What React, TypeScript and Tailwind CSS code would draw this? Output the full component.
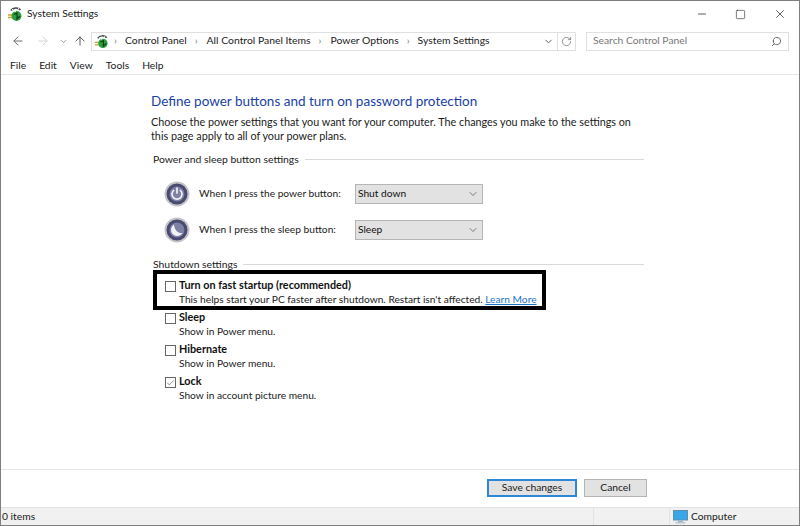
import React from 'react';
import { ArrowLeft, ArrowRight, ArrowUp, ChevronDown, RotateCw, Search, Minus, Square, X, Check } from 'lucide-react';

const AppIcon = ({ size = 16 }: { size?: number }) => (
  <svg width={size} height={size} viewBox="0 0 16 16" className="shrink-0">
    <path d="M1 9h4M1 11.5h4" stroke="#c9a227" strokeWidth="1.4" />
    <circle cx="9.5" cy="10" r="5" fill="#2e9e3f" />
    <path d="M7 8.5 10 7v6l3-3" fill="none" stroke="#0c3d16" strokeWidth="1.2" />
    <path d="M4 4.5C6 1.5 11 1 13.5 4" fill="none" stroke="#3c4a44" strokeWidth="1.6" />
    <path d="M5 3l3 3 4-4" fill="none" stroke="#dfe5e0" strokeWidth="1" />
  </svg>
);

const PowerIcon = ({ sleep }: { sleep?: boolean }) => (
  <svg width="26" height="26" viewBox="0 0 26 26" className="shrink-0">
    <circle cx="13" cy="13" r="12.5" fill="#c4c4c8" />
    <circle cx="13" cy="13" r="10.5" fill="#4a4a70" />
    <circle cx="13" cy="13" r="7.5" fill="#7e80a4" />
    {sleep ? (
      <path d="M10 7.500a6.200 6.200 0 1 0 8.500 8.500C14 16.500 10.500 13 10 7.500z" fill="#f2f2f6" />
    ) : (
      <g fill="none" stroke="#f2f2f6" strokeWidth="1.7" strokeLinecap="round">
        <path d="M9.600 9.500a5 5 0 1 0 6.800 0" />
        <path d="M13 7v5" />
      </g>
    )}
  </svg>
);

const SectionHeading = ({ title }: { title: string }) => (
  <div className="flex items-center gap-[6px] text-[10.4px] leading-[16px] text-[#1a1a1a]">
    <span>{title}</span>
    <div className="h-px flex-1 bg-[#d9d9d9]" />
  </div>
);

const PowerRow = ({ label, value, sleep }: { label: string; value: string; sleep?: boolean }) => (
  <div className="flex h-[26px] items-center">
    <PowerIcon sleep={sleep} />
    <span className="w-[165px] whitespace-nowrap pl-[9px] text-[10.2px] text-[#1a1a1a]">{label}</span>
    <div className="flex h-[20px] w-[128px] items-center justify-between border border-[#b5b5b5] bg-[#e2e2e2] pl-[2px] pr-[3px] text-[10.2px] text-[#111]">
      {value}
      <ChevronDown size={12} strokeWidth={1.5} className="text-[#555]" />
    </div>
  </div>
);

const ShutdownOption = ({ title, desc, checked, children }: { title: string; desc?: string; checked?: boolean; children?: React.ReactNode }) => (
  <div className="flex h-[32px] items-start">
    <div className="mt-[3px] flex h-[11px] w-[11px] shrink-0 items-center justify-center border border-[#666] bg-white">
      {checked && <Check size={10} strokeWidth={1.5} className="text-[#333]" />}
    </div>
    <div className="-mt-[1px] pl-[3px] leading-[15px]">
      <div className="text-[10.8px] font-bold text-[#111]">{title}</div>
      <div className="whitespace-nowrap text-[10.2px] text-[#222]">{desc}{children}</div>
    </div>
  </div>
);

export default function App() {
  return (
    <div
      className="flex h-[526px] w-[800px] flex-col overflow-hidden border border-[#7f7f7f] bg-white"
      style={{ fontFamily: 'Lato, Roboto, "Liberation Sans", sans-serif' }}
    >
      {/* title bar */}
      <div className="flex h-[26px] shrink-0 items-center justify-between pl-[6px] pr-[8px]">
        <div className="flex items-center gap-[4px] text-[10.3px] text-[#1a1a1a]">
          <AppIcon />
          System Settings
        </div>
        <div className="flex items-center gap-[27px] pr-[4px] text-[#222]">
          <Minus size={12} strokeWidth={1.5} />
          <Square size={11} strokeWidth={1.3} />
          <X size={14} strokeWidth={1.2} />
        </div>
      </div>

      {/* address bar */}
      <div className="mt-[2px] flex h-[24px] shrink-0 items-center pl-[10px] pr-[10px]">
        <ArrowLeft size={14} strokeWidth={1.6} className="text-[#666]" />
        <ArrowRight size={14} strokeWidth={1.6} className="ml-[11px] text-[#d2d2d2]" />
        <ChevronDown size={9} strokeWidth={1.8} className="ml-[9px] text-[#777]" />
        <ArrowUp size={14} strokeWidth={1.6} className="ml-[5px] text-[#555]" />
        <div className="ml-[4px] flex h-[19px] flex-1 items-center border border-[#e0e0e0] pl-[2px] text-[10.4px] text-[#222]">
          <AppIcon size={15} />
          <span className="ml-[5px] text-[#777]">›</span>
          <span className="ml-[8px]">Control Panel</span>
          <span className="ml-[8px] text-[#777]">›</span>
          <span className="ml-[9px]">All Control Panel Items</span>
          <span className="ml-[8px] text-[#777]">›</span>
          <span className="ml-[9px]">Power Options</span>
          <span className="ml-[8px] text-[#777]">›</span>
          <span className="ml-[8px] flex-1">System Settings</span>
          <ChevronDown size={11} strokeWidth={2} className="mr-[3px] text-[#555]" />
          <div className="flex h-full w-[18px] items-center justify-center border-l border-[#e0e0e0]">
            <RotateCw size={11} strokeWidth={1.5} className="text-[#666]" />
          </div>
        </div>
        <div className="ml-[10px] flex h-[19px] w-[203px] items-center justify-between border border-[#e0e0e0] pl-[6px] pr-[6px] text-[10.3px] text-[#777]">
          Search Control Panel
          <Search size={11} strokeWidth={1.8} className="-scale-x-100 text-[#555]" />
        </div>
      </div>

      {/* menu */}
      <div className="flex h-[22px] shrink-0 items-center gap-[13px] border-b border-[#e6e6e6] pl-[9px] pt-[4px] text-[10.3px] text-[#1a1a1a]">
        <span>File</span>
        <span>Edit</span>
        <span>View</span>
        <span>Tools</span>
        <span>Help</span>
      </div>

      {/* content */}
      <div className="flex flex-1 flex-col pl-[150px] pr-[155px] pt-[16px]">
        <h1 className="whitespace-nowrap text-[13.5px] font-normal leading-[20px] text-[#1a3fa6]">Define power buttons and turn on password protection</h1>
        <p className="mt-[4px] text-[10.8px] leading-[14px] text-[#1a1a1a]">
          Choose the power settings that you want for your computer. The changes you make to the settings on this page apply to all of your power plans.
        </p>
        <div className="mt-[8px] pl-[2px]">
          <SectionHeading title="Power and sleep button settings" />
          <div className="mt-[14px] flex flex-col gap-[10px] pl-[11px]">
            <PowerRow label="When I press the power button:" value="Shut down" />
            <PowerRow label="When I press the sleep button:" value="Sleep" sleep />
          </div>
          <div className="mt-[13px]">
            <SectionHeading title="Shutdown settings" />
          </div>
        </div>
        <div className="-mt-[2px] ml-[2px] h-[40px] w-[393px] border-[4px] border-black pl-[8px] pt-[4px]">
          <ShutdownOption title="Turn on fast startup (recommended)" desc="This helps start your PC faster after shutdown. Restart isn't affected. ">
            <span className="text-[#1a73c9] underline">Learn More</span>
          </ShutdownOption>
        </div>
        <div className="pl-[14px]">
          <ShutdownOption title="Sleep" desc="Show in Power menu." />
          <ShutdownOption title="Hibernate" desc="Show in Power menu." />
          <ShutdownOption title="Lock" desc="Show in account picture menu." checked />
        </div>
      </div>

      {/* footer buttons */}
      <div className="flex h-[38px] shrink-0 items-center justify-end gap-[7px] border-t border-[#e6e6e6] pb-[2px] pr-[152px]">
        <div className="flex h-[18px] w-[90px] items-center justify-center border-2 border-[#2f86d6] bg-[#e2e2e2] text-[10.3px] text-[#1a1a1a]">Save changes</div>
        <div className="flex h-[18px] w-[63px] items-center justify-center border border-[#b5b5b5] bg-[#e2e2e2] text-[10.3px] text-[#1a1a1a]">Cancel</div>
      </div>

      {/* status bar */}
      <div className="flex h-[18px] shrink-0 items-center border-t border-[#e2e2e2] bg-[#f1f1f1] text-[10.3px] text-[#1a1a1a]">
        <span className="w-[592px] pl-[1px]">0 items</span>
        <div className="flex h-full w-[76px] items-center border-l border-[#e2e2e2] pl-[3px]" />
        <div className="flex h-full flex-1 items-center gap-[3px] border-l border-[#e2e2e2] pl-[3px]">
          <svg width="15" height="14" viewBox="0 0 15 14" className="shrink-0">
            <rect x="0.5" y="0.5" width="14" height="9.5" fill="#38a6e8" stroke="#5a8fb0" />
            <rect x="5" y="10.5" width="5" height="1.5" fill="#9fb4c2" />
            <rect x="2.5" y="12" width="10" height="1.5" fill="#b9c6cf" />
          </svg>
          Computer
        </div>
      </div>
    </div>
  );
}
